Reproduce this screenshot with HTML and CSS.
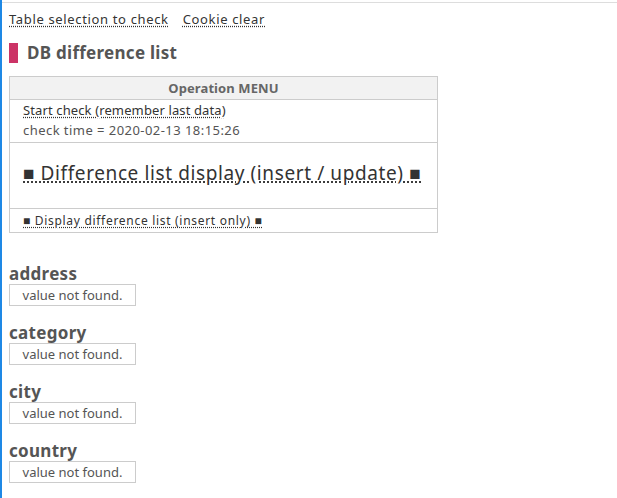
FILE: index.html
```html
<!DOCTYPE html>
<html>
<head>
<meta charset="utf-8">
<link rel="stylesheet" href="styles.css">
</head>
<body>
<div class="top">
  <nav class="nav">
    <a href="#">Table selection to check</a>
    <a href="#">Cookie clear</a>
  </nav>
  <h1 class="title">DB difference list</h1>
  <table class="menu">
    <tr><th>Operation MENU</th></tr>
    <tr><td class="row-start"><a href="#">Start check (remember last data)</a><div class="time">check time = 2020-02-13 18:15:26</div></td></tr>
    <tr><td class="row-big"><a href="#">■ Difference list display (insert / update) ■</a></td></tr>
    <tr><td class="row-small"><a href="#">■ Display difference list (insert only) ■</a></td></tr>
  </table>
  <section class="sec">
    <h2>address</h2>
    <div class="box">value not found.</div>
  </section>
  <section class="sec">
    <h2>category</h2>
    <div class="box">value not found.</div>
  </section>
  <section class="sec">
    <h2>city</h2>
    <div class="box">value not found.</div>
  </section>
  <section class="sec">
    <h2>country</h2>
    <div class="box">value not found.</div>
  </section>
</div>
</body>
</html>
```
FILE: styles.css
```css
html, body { margin: 0; padding: 0; }
body {
  border-left: 2px solid #1e88e5;
  min-height: 100vh;
  box-sizing: border-box;
  padding-top: 2px;
  font-family: "Noto Sans", sans-serif;
  font-size: 13px;
  color: #555;
  background: #fff;
  overflow: hidden;
}
.top {
  border-top: 1px solid #ddd;
  padding: 0 7px;
}
a { color: #333; text-decoration: underline dotted; text-underline-offset: 2px; }
.nav { padding-top: 7px; height: 22px; display: flex; gap: 14px; line-height: 18px; letter-spacing: 0.65px; }
.title {
  margin: 11px 0 0;
  font-size: 17px;
  line-height: 20px;
  font-weight: bold;
  color: #555;
  letter-spacing: 0.28px;
  display: flex;
  align-items: center;
}
.title::before {
  content: "";
  width: 9px;
  height: 20px;
  background: #cc3366;
  margin-right: 9px;
}
.menu {
  margin-top: 13px;
  width: 429px;
  border-collapse: collapse;
  border: 1px solid #ccc;
}
.menu th {
  background: #f2f2f2;
  height: 22px;
  padding: 0;
  font-weight: bold;
  color: #666;
  border-bottom: 1px solid #ccc;
  font-size: 13px;
  letter-spacing: 0.1px;
}
.menu td { border-bottom: 1px solid #ccc; padding: 0 0 0 13px; text-align: left; }
.row-start { height: 40px; line-height: 20px; padding-bottom: 2px !important; letter-spacing: 0.12px; }
.row-start .time { color: #555; letter-spacing: 0.45px; }
.row-big { height: 59px; font-size: 19px; letter-spacing: 0.6px; padding-bottom: 6px !important; }
.row-small { height: 23px; font-size: 12px; letter-spacing: 0.7px; }
.sec { margin-top: 31px; }
.sec + .sec { margin-top: 17px; }
.sec h2 {
  margin: 0;
  font-size: 17px;
  line-height: 20px;
  font-weight: bold;
  color: #555;
  letter-spacing: 0.3px;
}
.box {
  width: 125px;
  height: 20px;
  border: 1px solid #ccc;
  line-height: 20px;
  text-align: center;
  color: #555;
}
```
